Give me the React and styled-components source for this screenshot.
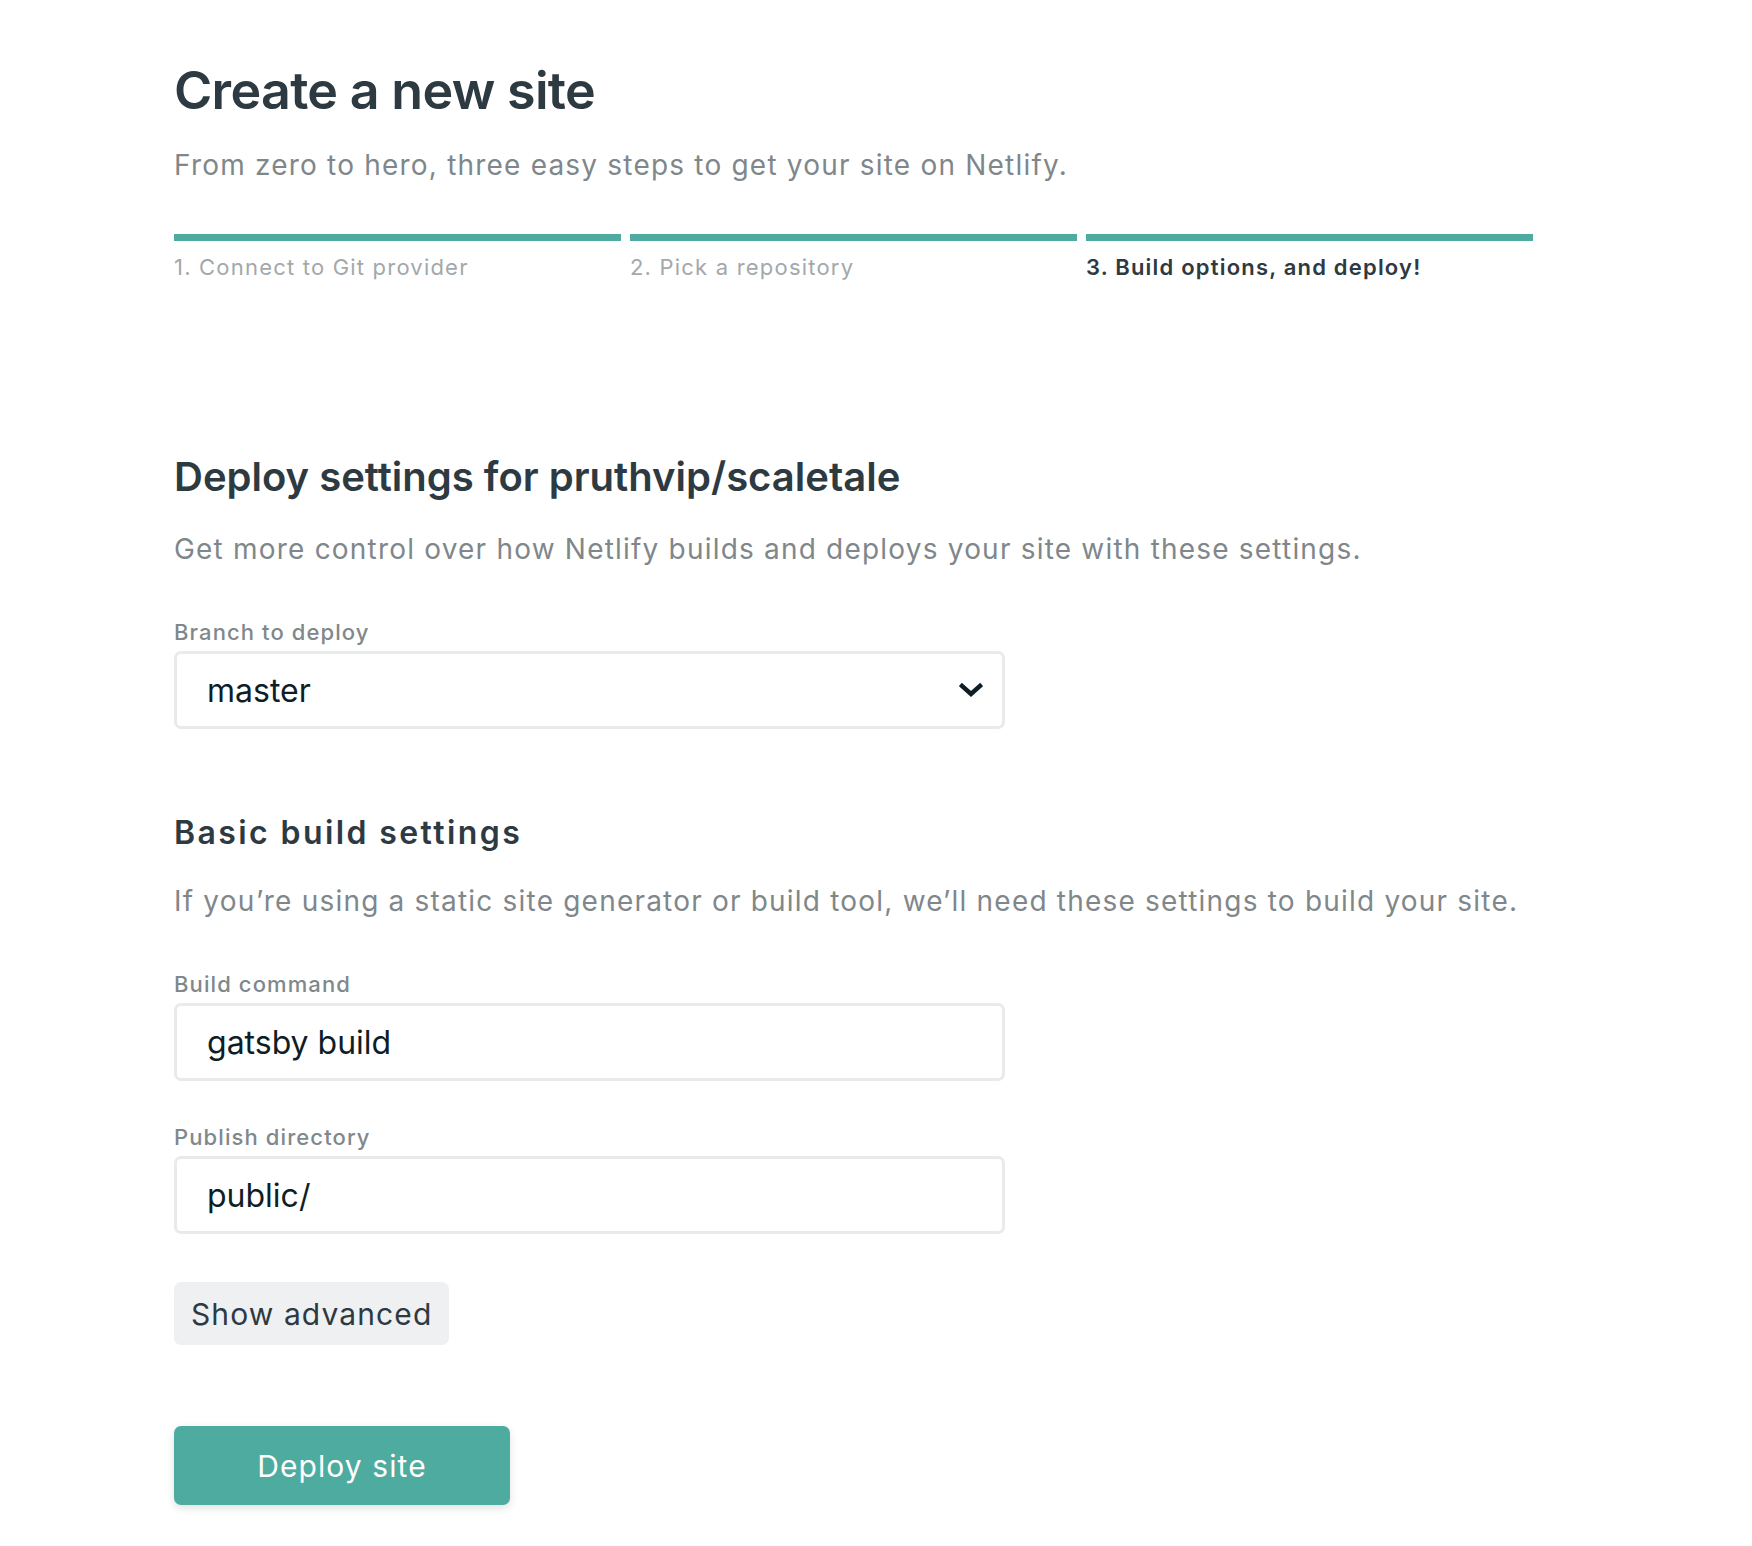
import styled, { createGlobalStyle } from "styled-components";

const GlobalStyle = createGlobalStyle`
  body {
    margin: 0;
    background: #fff;
    font-family: Inter, "Noto Sans", sans-serif;
  }
`;

const Page = styled.div`
  padding: 60px 0 40px 174px;
  width: 1359px;
`;

const Title = styled.h1`
  margin: 0;
  font-size: 52px;
  line-height: 62px;
  font-weight: 600;
  letter-spacing: -0.7px;
  color: #2e3a42;
`;

const Lead = styled.p`
  margin: ${(p) => p.$top || 0}px 0 0;
  font-size: 28px;
  line-height: 40px;
  letter-spacing: 1.2px;
  color: #7f878b;
`;

const Steps = styled.div`
  display: grid;
  grid-template-columns: repeat(3, 1fr);
  column-gap: 9px;
  margin-top: 49px;
`;

const Step = styled.div`
  display: flex;
  flex-direction: column;
`;

const Bar = styled.div`
  height: 7px;
  background: #4eab9f;
`;

const StepLabel = styled.span`
  margin-top: 11px;
  font-size: 22px;
  line-height: 30px;
  letter-spacing: 1.2px;
  font-weight: ${(p) => (p.$active ? 600 : 400)};
  color: ${(p) => (p.$active ? "#2e3a42" : "#a2a8ab")};
`;

const Heading = styled.h2`
  margin: ${(p) => p.$top}px 0 0;
  font-size: ${(p) => p.$size}px;
  line-height: ${(p) => p.$lh}px;
  font-weight: 600;
  letter-spacing: ${(p) => p.$ls || 0}px;
  color: #2e3a42;
`;

const Label = styled.label`
  display: block;
  margin-top: ${(p) => p.$top}px;
  font-size: 22px;
  line-height: 30px;
  font-weight: 500;
  letter-spacing: 1.1px;
  color: #80888c;
`;

const Field = styled.div`
  box-sizing: border-box;
  margin-top: 4px;
  width: 831px;
  height: 78px;
  border: 3px solid #e9ebeb;
  border-radius: 7px;
  display: flex;
  align-items: center;
  justify-content: space-between;
  padding: 0 30px;
  font-size: 32px;
  color: #0f1e26;
`;

const Chevron = styled.svg`
  width: 24px;
  height: 16px;
  margin-right: -11px;
`;

const GreyButton = styled.button`
  display: block;
  margin-top: 48px;
  height: 63px;
  padding: 0 17px;
  border: 0;
  border-radius: 7px;
  background: #eff0f2;
  font-family: inherit;
  font-size: 30px;
  letter-spacing: 1.1px;
  color: #2e3a42;
`;

const PrimaryButton = styled.button`
  display: block;
  margin-top: 81px;
  width: 336px;
  height: 79px;
  border: 0;
  border-radius: 7px;
  background: #4eab9f;
  box-shadow: 0 3px 8px rgba(0, 0, 0, 0.12);
  font-family: inherit;
  font-size: 30px;
  letter-spacing: 1.1px;
  color: #fff;
`;

export default function App() {
  return (
    <Page>
      <GlobalStyle />
      <Title>Create a new site</Title>
      <Lead $top={23}>From zero to hero, three easy steps to get your site on Netlify.</Lead>
      <Steps>
        <Step>
          <Bar />
          <StepLabel>1. Connect to Git provider</StepLabel>
        </Step>
        <Step>
          <Bar />
          <StepLabel>2. Pick a repository</StepLabel>
        </Step>
        <Step>
          <Bar />
          <StepLabel $active>3. Build options, and deploy!</StepLabel>
        </Step>
      </Steps>

      <Heading $top={170} $size={40} $lh={50}>
        Deploy settings for pruthvip/scaletale
      </Heading>
      <Lead $top={27}>Get more control over how Netlify builds and deploys your site with these settings.</Lead>

      <Label $top={48}>Branch to deploy</Label>
      <Field>
        <span>master</span>
        <Chevron viewBox="0 0 24 16">
          <polyline points="3,4 12,12 21,4" fill="none" stroke="#0f1e26" strokeWidth="4.5" strokeLinecap="square" />
        </Chevron>
      </Field>

      <Heading $top={84} $size={32} $lh={40} $ls={2.4}>
        Basic build settings
      </Heading>
      <Lead $top={28}>
        If you’re using a static site generator or build tool, we’ll need these settings to build your site.
      </Lead>

      <Label $top={48}>Build command</Label>
      <Field>
        <span>gatsby build</span>
      </Field>
      <Label $top={41}>Publish directory</Label>
      <Field>
        <span>public/</span>
      </Field>

      <GreyButton>Show advanced</GreyButton>
      <PrimaryButton>Deploy site</PrimaryButton>
    </Page>
  );
}
